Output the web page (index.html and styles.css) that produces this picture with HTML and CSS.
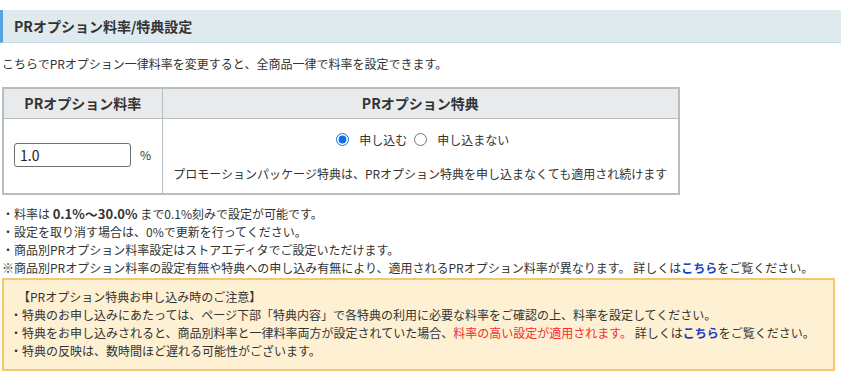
FILE: index.html
```html
<!DOCTYPE html>
<html lang="ja">
<head>
<meta charset="utf-8">
<link rel="stylesheet" href="styles.css">
</head>
<body>
<div class="page">
  <h2 class="section-title">PRオプション料率/特典設定</h2>
  <p class="intro">こちらでPRオプション一律料率を変更すると、全商品一律で料率を設定できます。</p>

  <table class="rate-table">
    <thead>
      <tr>
        <th class="col-rate">PRオプション料率</th>
        <th class="col-benefit">PRオプション特典</th>
      </tr>
    </thead>
    <tbody>
      <tr>
        <td class="rate-cell">
          <div class="rate-input-row">
            <input class="rate-input" type="text" value="1.0">
            <span class="unit">%</span>
          </div>
        </td>
        <td class="benefit-cell">
          <div class="radio-row">
            <label class="radio"><input type="radio" name="apply" checked><span>申し込む</span></label>
            <label class="radio"><input type="radio" name="apply"><span>申し込まない</span></label>
          </div>
          <p class="promo">プロモーションパッケージ特典は、PRオプション特典を申し込まなくても適用され続けます</p>
        </td>
      </tr>
    </tbody>
  </table>

  <ul class="notes">
    <li>・料率は <b>0.1%〜30.0%</b> まで0.1%刻みで設定が可能です。</li>
    <li>・設定を取り消す場合は、0%で更新を行ってください。</li>
    <li>・商品別PRオプション料率設定はストアエディタでご設定いただけます。</li>
    <li class="flush">※商品別PRオプション料率の設定有無や特典への申し込み有無により、適用されるPRオプション料率が異なります。 詳しくは<a class="link" href="#">こちら</a>をご覧ください。</li>
  </ul>

  <div class="caution">
    <p class="caution-title">【PRオプション特典お申し込み時のご注意】</p>
    <p>・特典のお申し込みにあたっては、ページ下部「特典内容」で各特典の利用に必要な料率をご確認の上、料率を設定してください。</p>
    <p>・特典をお申し込みされると、商品別料率と一律料率両方が設定されていた場合、<span class="warn">料率の高い設定が適用されます。</span> 詳しくは<a class="link" href="#">こちら</a>をご覧ください。</p>
    <p>・特典の反映は、数時間ほど遅れる可能性がございます。</p>
  </div>
</div>
</body>
</html>
```

FILE: styles.css
```css
* { box-sizing: border-box; }

body {
  margin: 0;
  background: #ffffff;
  color: #333333;
  font-family: "Noto Sans CJK JP", "Noto Sans", sans-serif;
  font-size: 12px;
  line-height: 18px;
}

.page {
  padding-top: 10px;
}

.section-title {
  margin: 0;
  height: 33px;
  padding-left: 11px;
  background: #dfeaef;
  border-left: 3px solid #5aa2e2;
  border-bottom: 1px solid #c7dbe2;
  font-size: 14px;
  font-weight: bold;
  line-height: 32px;
  color: #333333;
}

.intro {
  margin: 12px 0 0 2px;
}

.rate-table {
  margin: 14px 0 0 2px;
  width: 678px;
  border-collapse: collapse;
  border: 2px solid #b6bec0;
}

.rate-table th {
  height: 30px;
  padding: 0;
  background: #e8eaeb;
  border: 1px solid #b6bec0;
  font-size: 14px;
  font-weight: bold;
  text-align: center;
  color: #333333;
}

.col-rate { width: 159px; }

.rate-table td {
  border: 1px solid #b6bec0;
  padding: 0;
  height: 76px;
  vertical-align: top;
}

.rate-cell {
  padding-top: 24px !important;
  padding-left: 10px !important;
}

.rate-input-row {
  display: flex;
  align-items: center;
  gap: 9px;
}

.rate-input {
  width: 117px;
  height: 24px;
  border: 1px solid #6f6f6f;
  border-radius: 3px;
  padding: 0 5px;
  font-family: "Noto Sans CJK JP", "Noto Sans", sans-serif;
  font-size: 14px;
  color: #222222;
  background: #ffffff;
}

.unit {
  font-size: 12px;
  color: #333333;
}

.benefit-cell {
  text-align: center;
  padding-top: 12px !important;
}

.radio-row {
  display: flex;
  justify-content: center;
  gap: 7px;
  padding-left: 5px;
}

.radio {
  display: flex;
  align-items: center;
  gap: 10px;
}

.radio input {
  margin: 0;
  width: 13px;
  height: 13px;
  accent-color: #0b6ff0;
}

.promo {
  margin: 16px 0 0 0;
}

.notes {
  list-style: none;
  margin: 10px 0 0 2px;
  padding: 0;
}

.notes b {
  font-weight: bold;
  font-size: 13px;
}

.link {
  color: #1a3dbd;
  font-weight: bold;
  text-decoration: none;
}

.caution {
  margin: 1px 0 0 2px;
  width: 833px;
  background: #fef1d3;
  border: 2px solid #f8c56e;
  padding: 8px 6px 9px 6px;
}

.caution p {
  margin: 0;
}

.caution-title {
  padding-left: 8px;
}

.warn {
  color: #f52b2b;
}
```
